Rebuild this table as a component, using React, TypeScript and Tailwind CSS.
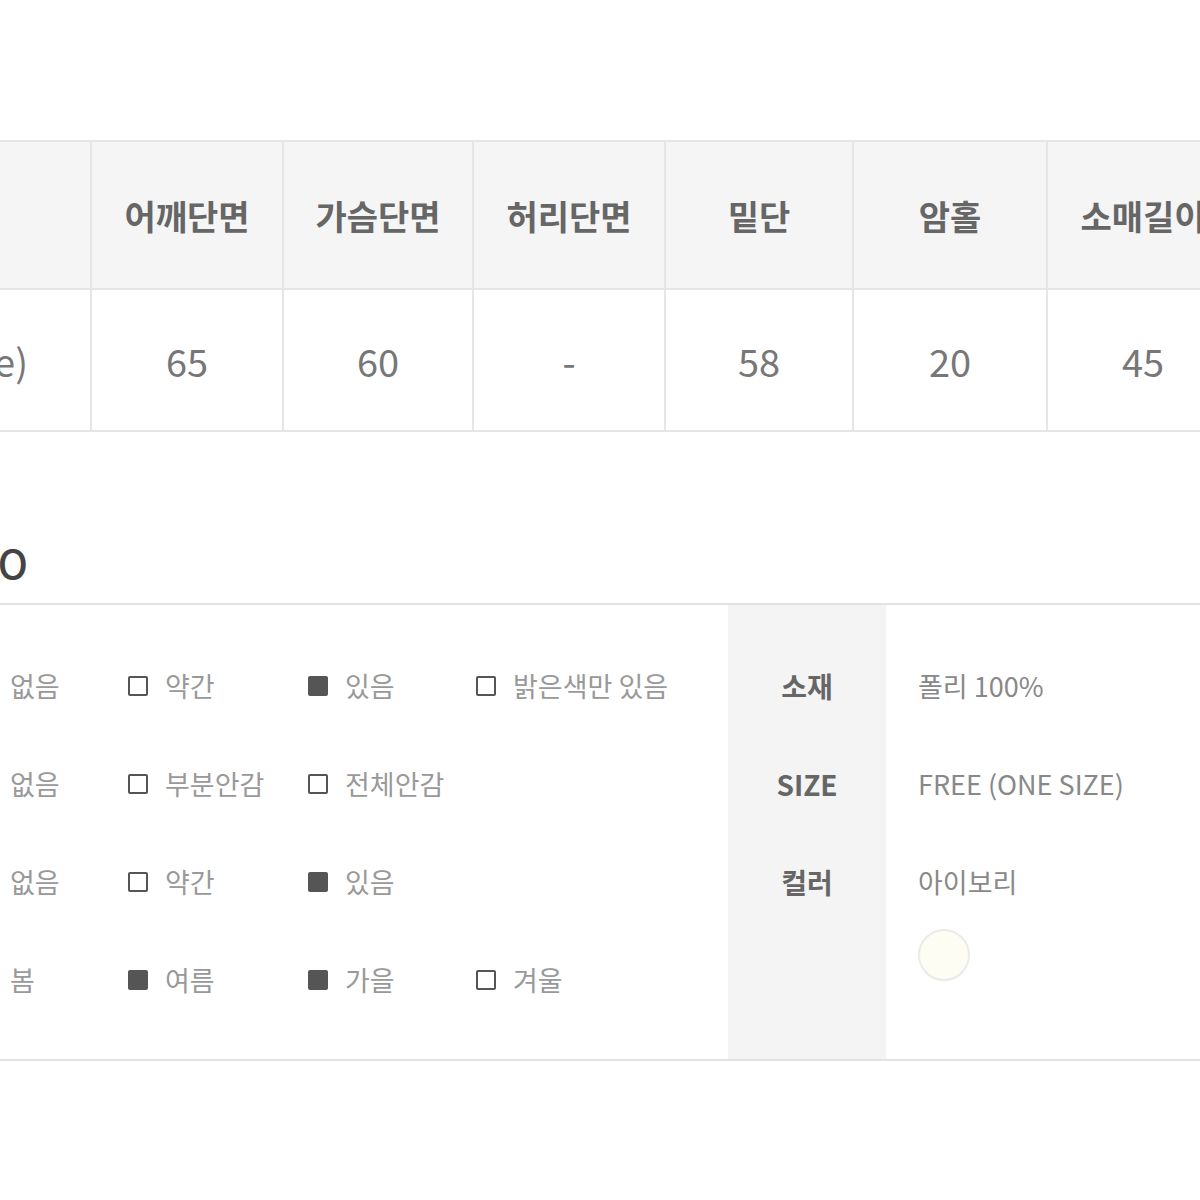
import clsx from "clsx";

const font = "font-['Noto_Sans_CJK_KR','Noto_Sans',sans-serif]";

const heads = ["어깨단면", "가슴단면", "허리단면", "밑단", "암홀", "소매길이"];
const values = ["65", "60", "-", "58", "20", "45"];
const colW = ["w-[190px]", "w-[188px]", "w-[190px]", "w-[186px]", "w-[192px]", "w-[190px]"];

type Opt = { label: string; on: boolean };

const checks: { title: string; opts: Opt[] }[] = [
    {
        title: "비침",
        opts: [
            { label: "없음", on: false },
            { label: "약간", on: false },
            { label: "있음", on: true },
            { label: "밝은색만 있음", on: false },
        ],
    },
    {
        title: "안감",
        opts: [
            { label: "없음", on: true },
            { label: "부분안감", on: false },
            { label: "전체안감", on: false },
        ],
    },
    {
        title: "신축성",
        opts: [
            { label: "없음", on: true },
            { label: "약간", on: false },
            { label: "있음", on: true },
        ],
    },
    {
        title: "계절",
        opts: [
            { label: "봄", on: true },
            { label: "여름", on: true },
            { label: "가을", on: true },
            { label: "겨울", on: false },
        ],
    },
];

const optW = ["w-[155px]", "w-[180px]", "w-[168px]", "w-[252px]"];

function Box({ on }: { on: boolean }) {
    return (
        <span
            className={clsx(
                "block h-[20px] w-[20px] shrink-0 rounded-[2px] border-[2.5px] border-[#555]",
                on ? "bg-[#555]" : "bg-white"
            )}
        />
    );
}

export default function App() {
    return (
        <div className={clsx("h-[1200px] w-[1200px] overflow-hidden bg-white", font)}>
            {/* size table */}
            <div className="mt-[140px] flex flex-col border-y-2 border-[#e6e6e6] bg-[#e6e6e6] gap-[2px] -ml-[234px] w-max">
                <div className="flex gap-[2px]">
                    <div className="h-[146px] w-[324px] bg-[#f5f5f5]" />
                    {heads.map((h, i) => (
                        <div
                            key={h}
                            className={clsx(
                                "flex h-[146px] items-center justify-center bg-[#f5f5f5] text-[34px] font-bold text-[#666]",
                                colW[i]
                            )}
                        >
                            {h}
                        </div>
                    ))}
                </div>
                <div className="flex gap-[2px]">
                    <div className="flex h-[140px] w-[324px] items-center justify-end bg-white pr-[62px] text-[38px] text-[#777]">
                        Free(one size)
                    </div>
                    {values.map((v, i) => (
                        <div
                            key={i}
                            className={clsx(
                                "flex h-[140px] items-center justify-center bg-white text-[38px] text-[#777]",
                                colW[i]
                            )}
                        >
                            {v}
                        </div>
                    ))}
                </div>
            </div>

            {/* info heading */}
            <div className="mt-[106px] -ml-[400px] w-[428px] text-right text-[40px] leading-[48px] font-medium text-[#444]">
                PRODUCT INFO
            </div>

            {/* info block */}
            <div className="mt-[17px] flex h-[458px] border-y-2 border-[#e2e2e2]">
                <div className="-ml-[177px] flex w-[905px] shrink-0 flex-col pt-[32px]">
                    {checks.map((row) => (
                        <div key={row.title} className="flex h-[98px] items-center">
                            <div className="w-[150px] text-[27px] font-bold text-[#666]">{row.title}</div>
                            {row.opts.map((o, i) => (
                                <div key={o.label + i} className={clsx("flex items-center gap-[17px]", optW[i])}>
                                    <Box on={o.on} />
                                    <span className="text-[27px] text-[#999]">{o.label}</span>
                                </div>
                            ))}
                        </div>
                    ))}
                </div>
                <div className="flex w-[158px] shrink-0 flex-col bg-[#f4f4f4] pt-[32px]">
                    {["소재", "SIZE", "컬러"].map((t) => (
                        <div key={t} className="flex h-[98px] items-center justify-center text-[28px] font-bold text-[#666]">
                            {t}
                        </div>
                    ))}
                </div>
                <div className="flex flex-1 flex-col pl-[32px] pt-[32px] text-[27px] text-[#888]">
                    <div className="flex h-[98px] items-center">폴리 100%</div>
                    <div className="flex h-[98px] items-center">FREE (ONE SIZE)</div>
                    <div className="flex h-[98px] items-center">아이보리</div>
                    <div className="-mt-[2px] h-[52px] w-[52px] rounded-full border-2 border-[#eaeaea] bg-[#fdfdf4]" />
                </div>
            </div>
        </div>
    );
}
